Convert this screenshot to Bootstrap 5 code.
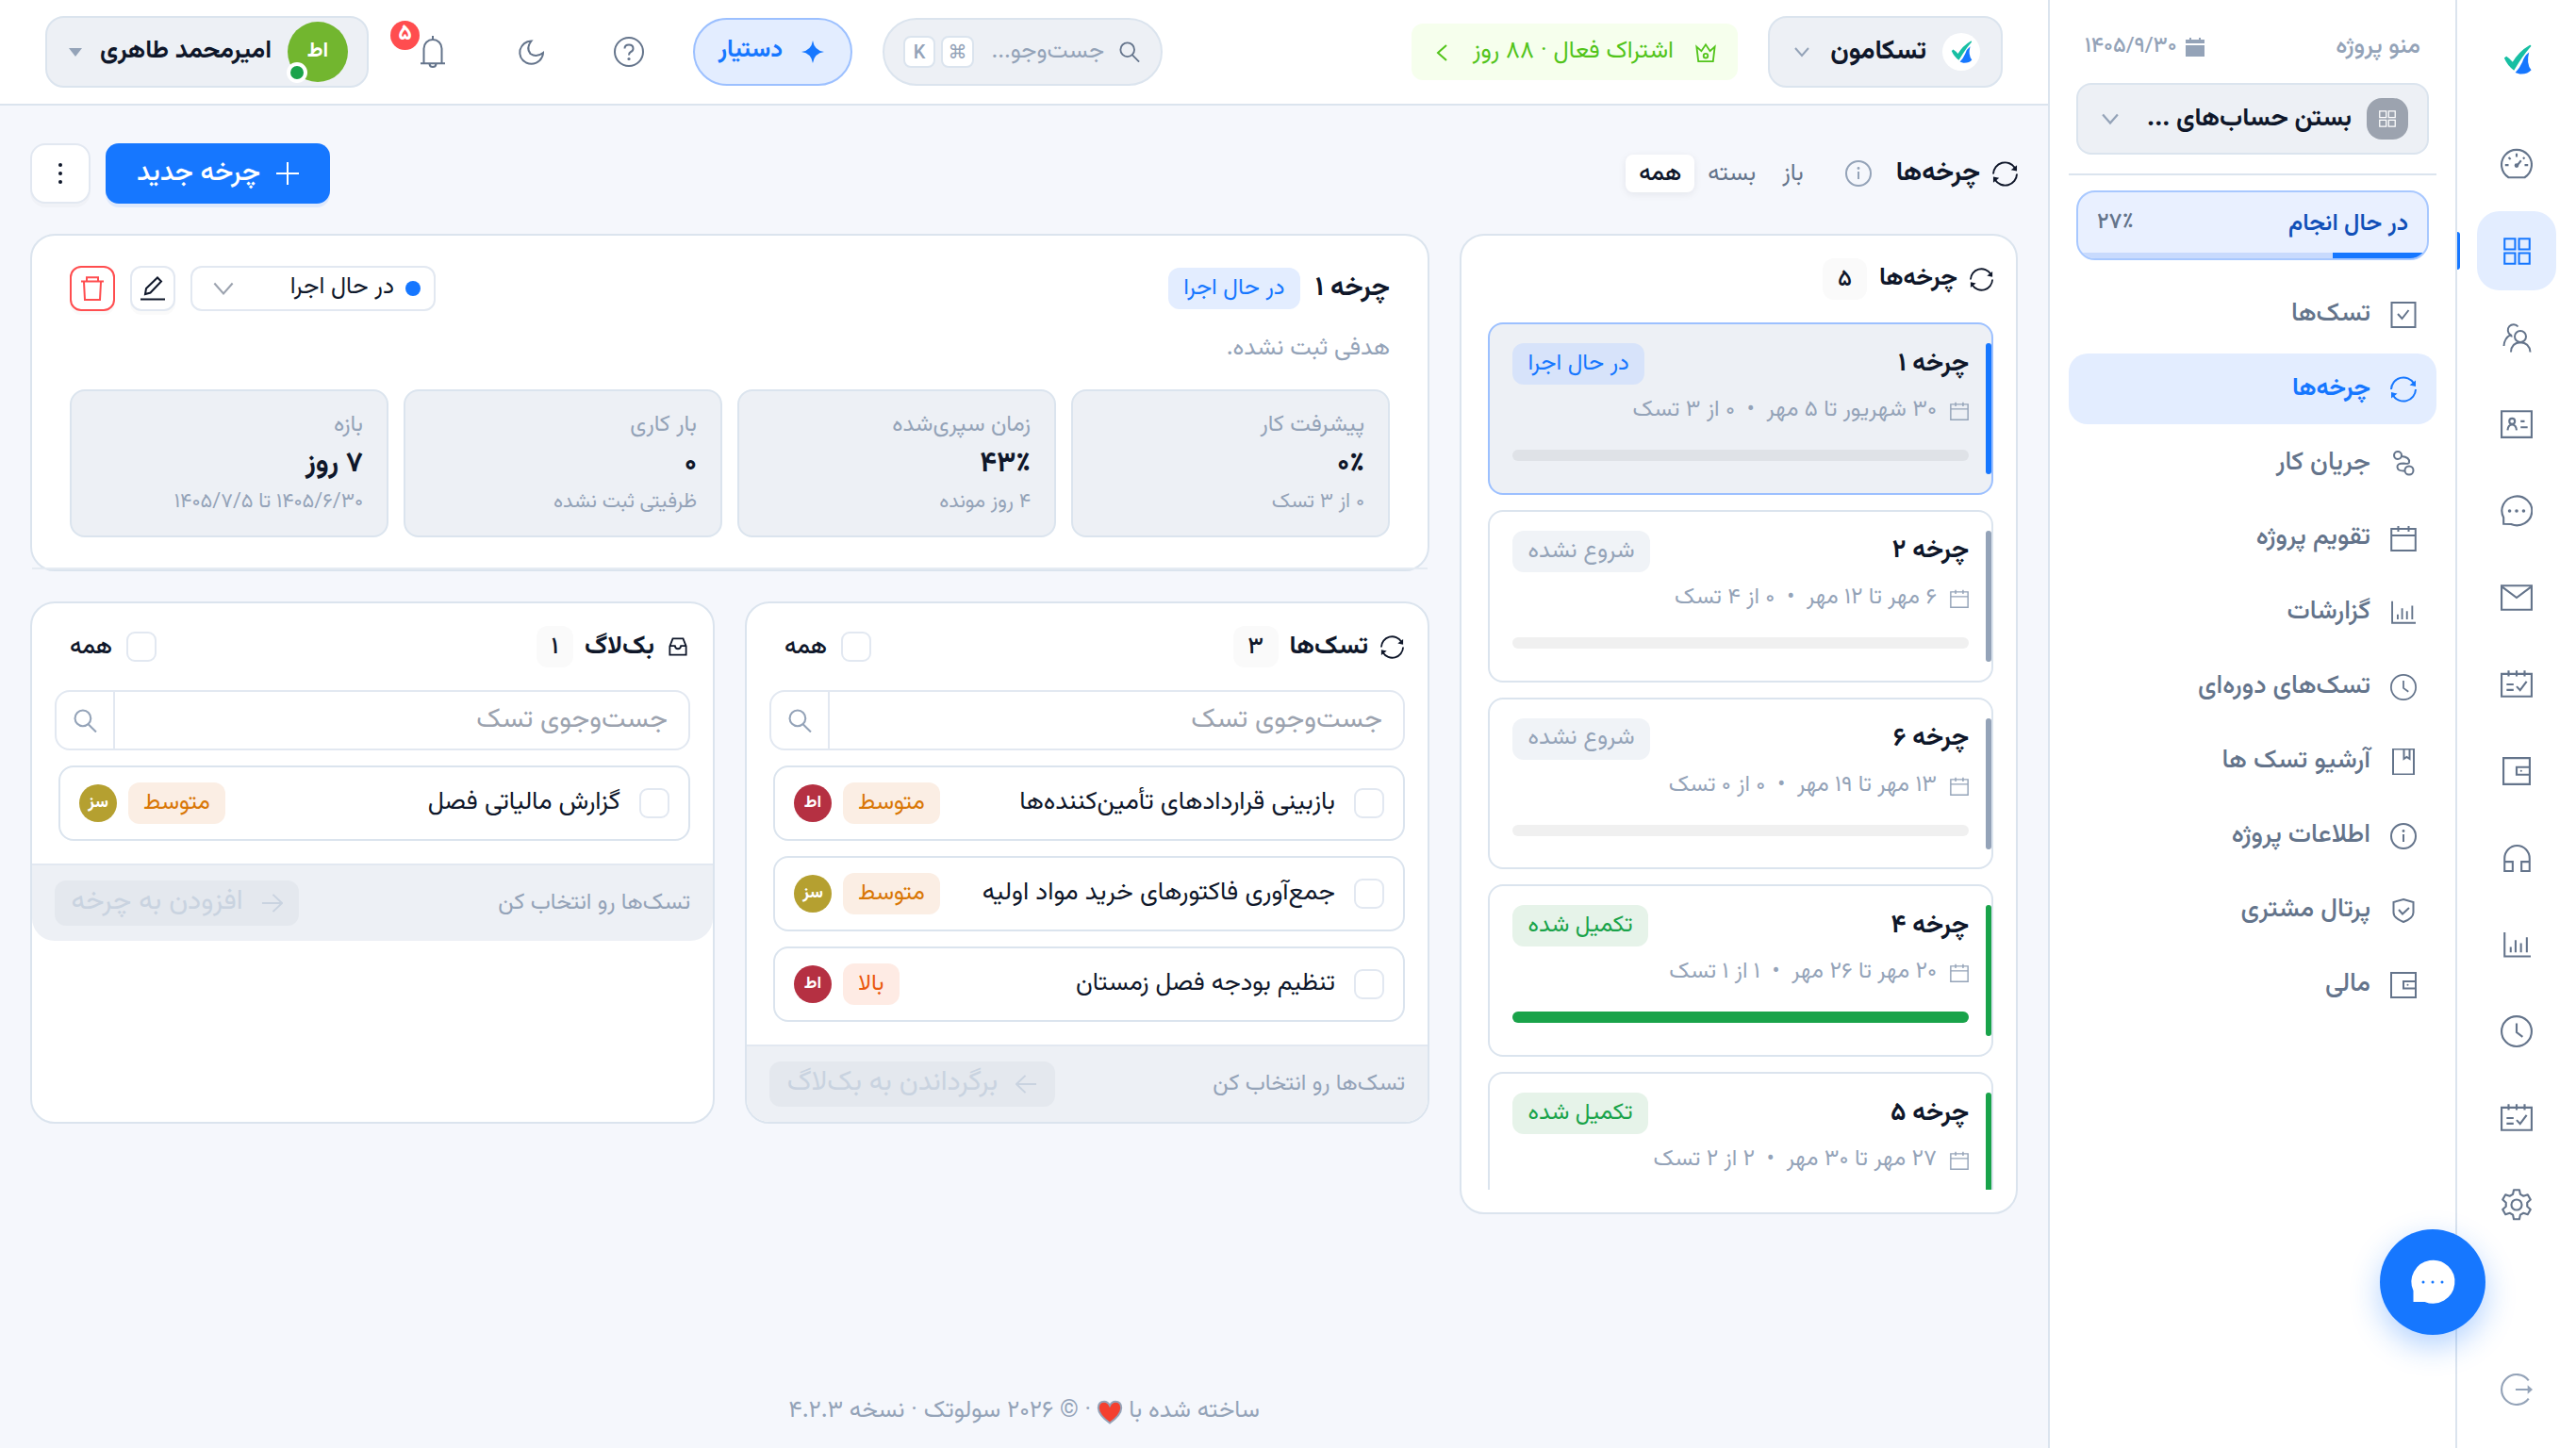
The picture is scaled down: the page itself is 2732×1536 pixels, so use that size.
<!DOCTYPE html>
<html lang="fa" dir="rtl">
<head>
<meta charset="utf-8">
<title>چرخه‌ها</title>
<link rel="stylesheet" href="https://cdn.jsdelivr.net/npm/bootstrap@5.3.0/dist/css/bootstrap.min.css">
<style>
:root{--line:#dbe4ee;--line2:#e2e8f1;--ink:#0f172a;--slate:#64748b;--mute:#94a3b8;--blue:#1677ff;--soft:#edf0f5}
body{font-family:Vazirmatn,"DejaVu Sans",sans-serif;font-size:27px;line-height:1.5;color:var(--ink);background:#f5f7fc;width:2732px;height:1536px;overflow:hidden}
svg{display:block;flex:none;fill:none;stroke:currentColor;stroke-width:2;overflow:visible}
.fillic{fill:currentColor;stroke:none}
.text-ink{color:var(--ink)}
.t{white-space:nowrap;line-height:1}
.rail{width:128px;border-left:2px solid var(--line);background:#fff;color:var(--slate)}
.rail-link{width:84px;height:84px;border-radius:24px;color:var(--slate)}
.rail-link.on{background:#e3edff;color:var(--blue)}
.rail-link.on::before{content:"";position:absolute;left:-21px;top:22px;width:3px;height:40px;background:var(--blue);border-radius:0 4px 4px 0}
.side{width:432px;border-left:2px solid var(--line);background:#fff;padding:0 20px}
.pick{height:76px;border:2px solid var(--line);border-radius:16px;background:var(--soft)}
.tile{width:44px;height:44px;border-radius:16px;background:#9ca3af;color:#fff}
.state{height:74px;border:2px solid #a8c8ff;border-radius:20px;background:#e9f0ff;overflow:hidden}
.state .track{height:6px;background:#c8dafd}
.menu-row{height:75px;border-radius:20px;padding:0 21px;gap:21px;color:var(--slate);font-size:27.3px;font-weight:500}
.menu-row.on{background:#e3edff;color:var(--blue);font-weight:700;font-size:26px}
.topbar{height:112px;border-bottom:2px solid var(--line);background:#fff;padding:0 48px;gap:32px}
.plan{width:346px;height:60px;border-radius:12px;background:#f6ffed;color:#52c41a;font-size:25.5px}
.find{width:297px;height:72px;border:2px solid var(--line);border-radius:36px;background:var(--soft);color:var(--mute)}
.key{height:34px;border:2px solid var(--line);border-radius:8px;background:#fff;font:500 20px Roboto,"DejaVu Sans",sans-serif}
.helper{width:169px;height:72px;border:2px solid #9cc0ff;border-radius:36px;background:#e3edff;color:var(--blue);font-weight:700;font-size:25.700px}
.round-btn{width:72px;height:72px;color:var(--slate)}
.alert-dot{left:-9px;top:3px;width:31px;height:31px;background:#ff4d4f;font-size:24px;padding-bottom:3px}
.ava{border-radius:50%;color:#fff;font-weight:700}
.filter{height:40px;border-radius:8px;font-size:25px;color:var(--slate)}
.filter.on{background:#fff;color:var(--ink);font-weight:500;box-shadow:0 2px 8px rgba(15,23,42,.08)}
.new-btn{width:238px;height:64px;border-radius:14px;background:var(--blue);color:#fff;font-size:29px;font-weight:500;box-shadow:0 4px 0 rgba(5,105,255,.09)}
.sq{border:2px solid var(--line2);background:#fff;box-shadow:0 4px 0 rgba(0,0,0,.02)}
.panel{background:#fff;border:2px solid var(--line);border-radius:26px}
.count{height:44px;border-radius:12px;background:#fafafa;font-size:25px;font-weight:500}
.tag{height:44px;border-radius:12px;font-size:24.5px;padding:0 16.5px;display:flex;align-items:center}
.tag-run{background:#e3edff;color:var(--blue)}
.tag-wait{background:#f0f3f7;color:var(--mute)}
.tag-done{background:#e6f3e9;color:#19a34a}
.tag-mid{background:#fbeee4;color:#d97706;padding:0 16px}
.tag-high{background:#feebe4;color:#ea580c;padding:0 16px}
.cycle{height:182.8px;margin-bottom:16px;border:2px solid var(--line);border-radius:16px;padding:20px 24px;flex:none;position:relative}
.cycle.on{background:var(--soft);border-color:#9cc0ff}
.cycle.on .tag{background:#d7e3fa}
.cycle::after{content:"";position:absolute;right:0;top:20px;width:6px;height:139px;border-radius:3px;background:currentColor}
.c-run{color:var(--blue)}.c-wait{color:var(--mute)}.c-done{color:#19a34a}
.when{color:var(--mute);font-size:23.8px;gap:14px;height:24px;margin-top:16px}
.meter{height:12px;border-radius:6px;background:#f0f0f0;margin-top:29px}
.cycle.on .meter{background:#dfe2e7}
.meter div{height:12px;border-radius:6px;background:#19a34a}
.stat{flex:1;height:157px;border:2px solid var(--line);border-radius:16px;background:var(--soft);padding:24px 25px 0;color:var(--mute)}
.stat-name{font-size:24.2px}
.stat-value{font-size:30px;margin:15px 0;color:var(--ink)}
.stat-note{font-size:21.6px}
.box{width:32px;height:32px;border:2px solid var(--line2);border-radius:9px;background:#fff;flex:none}
.seek{height:64px;border:2px solid var(--line2);border-radius:16px;font-size:28.7px;color:#9ca3af;margin:0 24px}
.seek .go{width:62px;border-right:2px solid var(--line2);color:var(--mute)}
.task{height:80px;border:2px solid var(--line);border-radius:16px;margin:16px 24px 0 28px;padding:0 20px;font-size:26.8px}
.foot{height:82px;border-top:2px solid var(--line2);background:var(--soft);border-radius:0 0 24px 24px;margin-top:24px;padding:0 24px;color:var(--mute);font-size:24px}
.off-btn{height:48px;border-radius:12px;background:#e4e8ee;color:#c9d3e0;font-size:29.5px}
.chat{left:2524px;top:1304px;width:112px;height:112px;border-radius:50%;background:var(--blue);color:#fff;box-shadow:0 12px 32px rgba(22,119,255,.32)}
</style>
<script src="https://cdn.jsdelivr.net/npm/bootstrap@5.3.0/dist/js/bootstrap.bundle.min.js"></script>
</head>
<body>
<svg width="0" height="0" class="position-absolute">
<symbol id="logo" viewBox="0 0 32 34"><path d="M1.500 15.500 4 13.500Q8 16 11 20 18 8 30 1 31.500.3 31.800 2 22 13 12.500 29.500Q5 24 1.500 15.500Z" fill="#17bfa3" stroke="none"/><path d="M29.500 9Q26 22 32 29 28 34 19 33.500L14 32Q19 27 22 20 24 13 29.500 9Z" fill="#1677ff" stroke="none"/></symbol>
<symbol id="gauge" viewBox="0 0 32 32"><path d="M8 29.400H24A15 15 0 1 0 8 29.400ZM16 5.500V9M4.500 17H8M24 17h3.500M8 9.300l2 2M24 9.300l-1.500 1.500M16.500 17.500l4-5"/><circle cx="16" cy="17.500" r="1.200" fill="currentColor"/></symbol>
<symbol id="grid" viewBox="0 0 28 28"><path d="M1.200 1.200H12V12H1.200ZM16 1.200H26.800V12H16ZM1.200 16H12V26.800H1.200ZM16 16H26.800V26.800H16Z"/></symbol>
<symbol id="users" viewBox="0 0 32 32"><circle cx="20" cy="15" r="6"/><path d="M10 31.500Q10.500 21.500 20 21.300 29.500 21.500 30.500 31.500M17.500 4.500A6 6 0 1 0 9.500 13.200Q3 17 2.500 25M9.500 13.200Q10 15 11.500 14.500"/></symbol>
<symbol id="idcard" viewBox="0 0 32 32"><path d="M1 3H31V29H1ZM20 13H24M20 19H27"/><circle cx="11.500" cy="13" r="2.800"/><path d="M7 22Q7.500 16.500 11.500 16.500T16 22"/></symbol>
<symbol id="talk" viewBox="0 0 32 32"><path d="M3 29V22.500A15 14.500 0 1 1 10.500 29.200Z"/><g fill="currentColor" stroke="none"><circle cx="9" cy="16" r="1.700"/><circle cx="16" cy="16" r="1.700"/><circle cx="23" cy="16" r="1.700"/></g></symbol>
<symbol id="mail" viewBox="0 0 32 32"><path d="M1 4H31V28H1ZM2 5.500 16 16 30 5.500"/></symbol>
<symbol id="sched" viewBox="0 0 32 32"><path d="M1 5.500H31V28H1ZM8 2V8M16 2V8M24 2V8M6 16H13M6 21.500H13M16 18l3.500 3.800L26 13"/></symbol>
<symbol id="wallet" viewBox="0 0 28 28"><path d="M1 1H27V27H1ZM27 10H14V17.500H27"/><circle cx="18.500" cy="13.800" r="1" fill="currentColor" stroke="none"/></symbol>
<symbol id="phones" viewBox="0 0 28 28"><path d="M1.200 16V14A12.800 13 0 0 1 26.800 14V27H18.500V17.500H26.800M1.200 14V27H9.500V17.500H1.200"/></symbol>
<symbol id="bars" viewBox="0 0 28 28"><path d="M1.200 1V25.500H28M7.500 21.500V16M12.500 21.500V9M18 21.500V12M24 21.500V6"/></symbol>
<symbol id="clock" viewBox="0 0 32 32"><circle cx="16" cy="16" r="15"/><path d="M16 8V17L22 21.500"/></symbol>
<symbol id="gear" viewBox="0 0 32 32"><path stroke-linejoin="round" d="M13.200 1.200h5.600l.9 4.300 3.200 1.800 4.200-1.400 2.800 4.900-3.300 3v3.900l3.300 3-2.800 4.900-4.200-1.400-3.200 1.800-.9 4.300h-5.600l-.9-4.300-3.200-1.800-4.200 1.400-2.800-4.900 3.300-3v-3.900l-3.300-3 2.800-4.900 4.200 1.400 3.200-1.800z"/><circle cx="16" cy="16" r="5.200"/></symbol>
<symbol id="exit" viewBox="0 0 32 32"><path d="M28 7A15 15 0 1 0 28 25M15 16H29"/><path d="M27 11.500 32 16 27 20.500Z" fill="currentColor" stroke="none"/></symbol>
<symbol id="tick" viewBox="0 0 28 28"><path d="M1.500 1H26.500V27H1.500ZM8 13l4.500 5L19.500 9"/></symbol>
<symbol id="sync" viewBox="0 0 28 28"><path d="M1 14A13 13 0 0 1 25 7.500M27 14A13 13 0 0 1 3 20.500"/><path d="M27 4.500V11L20.500 9.500ZM1 23.500V17L7.500 18.500Z" fill="currentColor" stroke="none"/></symbol>
<symbol id="flow" viewBox="0 0 28 28"><circle cx="8" cy="5" r="4"/><circle cx="20" cy="21" r="4.500"/><path d="M12 6Q21 7 20 12.500 19.500 14.500 14 13.500 7 13.500 7.500 17.500 8 22 15.500 21.500"/></symbol>
<symbol id="cal" viewBox="0 0 28 28"><path d="M1.200 4H26.800V27H1.200ZM1.200 11H26.800M8.500 1V7M19.500 1V7"/></symbol>
<symbol id="mark-book" viewBox="0 0 28 28"><path d="M3 .5H25V27.500H3ZM14.500.5V11L17.500 9 20.500 11V.5"/></symbol>
<symbol id="info" viewBox="0 0 28 28"><circle cx="14" cy="14" r="13"/><path d="M14 12V20"/><circle cx="14" cy="8.500" r="1.400" fill="currentColor" stroke="none"/></symbol>
<symbol id="shield" viewBox="0 0 28 28"><path d="M14 2 24.500 5V16Q24.500 22 14 26 3.500 22 3.500 16V5ZM9 13l4 4.500L20 11"/></symbol>
<symbol id="crown" viewBox="0 0 24 24"><path d="M1.500 5 7 10 12 2.500 17 10 22.500 5 20.500 22H3.500Z"/><circle cx="12" cy="15.500" r="2.500"/></symbol>
<symbol id="down" viewBox="0 0 16 16"><path d="M1 4 8 12 15 4"/></symbol>
<symbol id="lens" viewBox="0 0 24 24"><circle cx="9.500" cy="9.500" r="8"/><path d="M15 15.500 23 23.500"/></symbol>
<symbol id="inbox" viewBox="0 0 22 22"><path d="M1.500 10.500 5 1.500H17L20.500 10.500V20.500H1.500ZM1.500 10H7.500Q8 13.500 11 13.500T14.500 10H20.500"/></symbol>
<symbol id="arrow" viewBox="0 0 24 24"><path d="M1 12H23M13 2.500 23 12 13 21.500"/></symbol>
</svg>

<div class="d-flex h-100">
<nav class="rail d-flex flex-column align-items-center flex-shrink-0">
  <div class="d-flex align-items-center" style="height:132px;padding-bottom:6px"><svg width="31" height="32"><use href="#logo"/></svg></div>
  <div class="d-flex flex-column gap-2">
    <a class="rail-link d-flex align-items-center justify-content-center"><svg width="34" height="34"><use href="#gauge"/></svg></a>
    <a class="rail-link on position-relative d-flex align-items-center justify-content-center"><svg width="29" height="29"><use href="#grid"/></svg></a>
    <a class="rail-link d-flex align-items-center justify-content-center"><svg width="32" height="32"><use href="#users"/></svg></a>
    <a class="rail-link d-flex align-items-center justify-content-center"><svg width="34" height="34"><use href="#idcard"/></svg></a>
    <a class="rail-link d-flex align-items-center justify-content-center"><svg width="34" height="34"><use href="#talk"/></svg></a>
    <a class="rail-link d-flex align-items-center justify-content-center"><svg width="34" height="34"><use href="#mail"/></svg></a>
    <a class="rail-link d-flex align-items-center justify-content-center"><svg width="34" height="34"><use href="#sched"/></svg></a>
    <a class="rail-link d-flex align-items-center justify-content-center"><svg width="30" height="30"><use href="#wallet"/></svg></a>
    <a class="rail-link d-flex align-items-center justify-content-center"><svg width="29" height="29"><use href="#phones"/></svg></a>
    <a class="rail-link d-flex align-items-center justify-content-center"><svg width="29" height="29"><use href="#bars"/></svg></a>
    <a class="rail-link d-flex align-items-center justify-content-center"><svg width="34" height="34"><use href="#clock"/></svg></a>
    <a class="rail-link d-flex align-items-center justify-content-center"><svg width="34" height="34"><use href="#sched"/></svg></a>
    <a class="rail-link d-flex align-items-center justify-content-center"><svg width="34" height="34"><use href="#gear"/></svg></a>
  </div>
  <a class="rail-link d-flex align-items-center justify-content-center mt-auto" style="margin-bottom:20px;color:#94a3b8"><svg width="34" height="34"><use href="#exit"/></svg></a>
</nav>

<aside class="side flex-shrink-0">
  <div class="d-flex align-items-center justify-content-between" style="height:88px;padding:13px 17px 0;color:#94a3b8">
    <span class="t fw-medium" style="font-size:25.500px">منو پروژه</span>
    <span class="d-flex align-items-center" style="gap:9px"><svg class="fillic" width="20" height="20" viewBox="0 0 20 20"><path d="M0 2H4V0H6V2H14V0H16V2H20V6H0ZM0 8H20V20H0Z"/></svg><span class="t fw-medium" style="font-size:22.800px">۱۴۰۵/۹/۳۰</span></span>
  </div>
  <div class="pick d-flex align-items-center mx-2" style="padding:0 20px">
    <span class="tile d-flex align-items-center justify-content-center"><svg width="18" height="18" stroke-width="3"><use href="#grid"/></svg></span>
    <span class="t fw-bold" style="margin-right:16px;font-size:27px">بستن حساب‌های ...</span>
    <svg width="18" height="18" style="margin-right:auto;margin-left:5px;color:#94a3b8"><use href="#down"/></svg>
  </div>
  <div style="height:22px;border-bottom:2px solid #dbe4ee"></div>
  <div class="state d-flex flex-column mx-2" style="margin-top:16px;margin-bottom:20px">
    <div class="d-flex flex-fill align-items-center justify-content-between" style="padding:2px 20px 0">
      <span class="t fw-semibold" style="color:#1150b8;font-size:25px">در حال انجام</span><span class="t fw-medium" style="color:#64748b;font-size:23.500px">۲۷٪</span>
    </div>
    <div class="track"><div style="width:27%;height:6px;background:#1677ff"></div></div>
  </div>
  <div class="d-flex flex-column gap-1">
    <a class="menu-row text-decoration-none d-flex align-items-center"><svg width="28" height="28"><use href="#tick"/></svg><span class="t">تسک‌ها</span></a>
    <a class="menu-row on text-decoration-none d-flex align-items-center"><svg width="28" height="28"><use href="#sync"/></svg><span class="t">چرخه‌ها</span></a>
    <a class="menu-row text-decoration-none d-flex align-items-center"><svg width="28" height="28"><use href="#flow"/></svg><span class="t">جریان کار</span></a>
    <a class="menu-row text-decoration-none d-flex align-items-center"><svg width="28" height="28"><use href="#cal"/></svg><span class="t">تقویم پروژه</span></a>
    <a class="menu-row text-decoration-none d-flex align-items-center"><svg width="28" height="28" viewBox="-1 -1 30 30"><use href="#bars" width="28" height="28"/></svg><span class="t">گزارشات</span></a>
    <a class="menu-row text-decoration-none d-flex align-items-center"><svg width="28" height="28"><use href="#clock"/></svg><span class="t">تسک‌های دوره‌ای</span></a>
    <a class="menu-row text-decoration-none d-flex align-items-center"><svg width="28" height="28"><use href="#mark-book"/></svg><span class="t">آرشیو تسک ها</span></a>
    <a class="menu-row text-decoration-none d-flex align-items-center"><svg width="28" height="28"><use href="#info"/></svg><span class="t">اطلاعات پروژه</span></a>
    <a class="menu-row text-decoration-none d-flex align-items-center"><svg width="28" height="28"><use href="#shield"/></svg><span class="t">پرتال مشتری</span></a>
    <a class="menu-row text-decoration-none d-flex align-items-center"><svg width="28" height="28"><use href="#wallet"/></svg><span class="t">مالی</span></a>
  </div>
</aside>

<div class="d-flex flex-column flex-fill" style="min-width:0">
<header class="topbar d-flex align-items-center">
  <div class="pick d-flex align-items-center" style="width:249px;border-radius:20px;padding:0 22px">
    <span class="d-flex align-items-center justify-content-center bg-white rounded-circle" style="width:40px;height:40px"><svg width="24" height="24"><use href="#logo"/></svg></span>
    <span class="t fw-bold" style="margin-right:17px;font-size:28px">تسکامون</span>
    <svg width="16" height="16" style="margin-right:auto;margin-left:4px;color:#94a3b8"><use href="#down"/></svg>
  </div>
  <div class="plan d-flex align-items-center" style="padding:2px 23px 0">
    <svg width="22" height="22"><use href="#crown"/></svg>
    <span class="t" style="margin-right:23px">اشتراک فعال · ۸۸ روز</span>
    <svg width="18" height="16" viewBox="0 0 18 16" style="margin-right:auto" stroke-width="1.600"><path d="M14 0 5 8 14 16"/></svg>
  </div>
  <div class="find d-flex align-items-center" style="margin-right:auto;padding:0 22px 0 20px">
    <svg width="22" height="22" style="color:#64748b"><use href="#lens"/></svg>
    <span class="t" style="margin-right:16px;font-size:24.800px">جست‌وجو...</span>
    <span class="d-flex" style="gap:6px;margin-right:auto"><span class="key d-flex align-items-center justify-content-center" style="width:35px">⌘</span><span class="key d-flex align-items-center justify-content-center" style="width:34px">K</span></span>
  </div>
  <div class="helper d-flex align-items-center" style="gap:20px;padding-right:28px">
    <svg class="fillic" width="24" height="24" viewBox="0 0 24 24"><path d="M12 0Q13.500 10.500 24 12 13.500 13.500 12 24 10.500 13.500 0 12 10.500 10.500 12 0Z"/></svg><span class="t">دستیار</span>
  </div>
  <span class="round-btn d-flex align-items-center justify-content-center"><svg width="32" height="32" viewBox="0 0 32 32"><circle cx="16" cy="16" r="15"/><path d="M11.500 12.500Q11.500 8.500 16 8.500T20.500 12.500Q20.500 15 18 16 16 17 16 19.500"/><circle cx="16" cy="23.500" r="1.600" fill="currentColor" stroke="none"/></svg></span>
  <span class="round-btn d-flex align-items-center justify-content-center"><svg width="27" height="27" viewBox="0 0 27 27"><path d="M13.500 1.500Q4.500 2 1.500 11 0 20 8 24.500 16 28 22.500 22 26 18 26 14 19 19.500 12.500 15 7.500 9 13.500 1.500Z"/></svg></span>
  <span class="round-btn position-relative d-flex align-items-center justify-content-center"><svg width="28" height="34" viewBox="0 0 28 34"><path d="M14 0V4M4.500 29V13.500A9.500 9.500 0 0 1 23.500 13.500V29M1 29.200H27M10.500 30Q11 33 14 33T17.500 30"/></svg><span class="alert-dot position-absolute rounded-circle text-white fw-bold d-flex align-items-center justify-content-center t">۵</span></span>
  <div class="pick d-flex align-items-center" style="width:343px;border-radius:20px;padding:0 20px">
    <span class="ava position-relative d-flex align-items-center justify-content-center t" style="width:64px;height:64px;background:#72b62f;font-size:22px">اط<span class="position-absolute rounded-circle" style="left:-1px;bottom:-1px;width:22px;height:22px;border:4px solid #fff;background:#19a34a"></span></span>
    <span class="t fw-bold" style="margin-right:17px;font-size:26.500px">امیرمحمد طاهری</span>
    <svg class="fillic" width="14" height="9" viewBox="0 0 14 9" style="margin-right:auto;margin-left:3px;color:#94a3b8"><path d="M0 0H14L7 9Z"/></svg>
  </div>
</header>

<main class="d-flex flex-column flex-fill" style="padding:40px 32px 0">
  <div class="d-flex align-items-center" style="height:64px;margin-bottom:32px">
    <svg width="27" height="27"><use href="#sync"/></svg>
    <span class="t fw-bold" style="margin-right:13px;font-size:28px">چرخه‌ها</span>
    <svg width="28" height="28" style="margin-right:26px;color:#94a3b8"><use href="#info"/></svg>
    <div class="d-flex" style="margin-right:30px">
      <span class="filter d-flex align-items-center" style="padding:0 14px"><span class="t">باز</span></span>
      <span class="filter d-flex align-items-center" style="padding:0 14px"><span class="t">بسته</span></span>
      <span class="filter on d-flex align-items-center" style="padding:0 14px"><span class="t">همه</span></span>
    </div>
    <div class="new-btn d-flex align-items-center justify-content-center" style="margin-right:auto;gap:17px"><svg width="24" height="24" viewBox="0 0 24 24"><path d="M12 0V24M0 12H24"/></svg><span class="t">چرخه جدید</span></div>
    <div class="sq d-flex align-items-center justify-content-center" style="width:64px;height:64px;border-radius:16px;margin-right:16px"><svg class="fillic" width="4" height="24" viewBox="0 0 4 24"><circle cx="2" cy="3" r="2"/><circle cx="2" cy="12" r="2"/><circle cx="2" cy="21" r="2"/></svg></div>
  </div>

  <div class="d-flex align-items-start" style="gap:32px">
    <section class="panel flex-shrink-0 d-flex flex-column" style="width:592px;height:1040px;padding:0 24px 0 28px">
      <div class="d-flex align-items-center" style="height:92px">
        <svg width="25" height="25"><use href="#sync"/></svg><span class="t fw-bold" style="margin-right:13px;font-size:26px">چرخه‌ها</span>
        <span class="count t d-flex align-items-center justify-content-center" style="width:47px;margin-right:13px">۵</span>
      </div>
      <div class="overflow-hidden d-flex flex-column" style="height:920px">
        <div class="cycle on c-run"><div class="d-flex justify-content-between align-items-center"><span class="t fw-bold text-ink">چرخه ۱</span><span class="tag tag-run t">در حال اجرا</span></div>
          <div class="when d-flex align-items-center"><svg width="20" height="20"><use href="#cal"/></svg><span class="t">۳۰ شهریور تا ۵ مهر&nbsp; • &nbsp;۰ از ۳ تسک</span></div><div class="meter"></div></div>
        <div class="cycle c-wait"><div class="d-flex justify-content-between align-items-center"><span class="t fw-bold text-ink">چرخه ۲</span><span class="tag tag-wait t">شروع نشده</span></div>
          <div class="when d-flex align-items-center"><svg width="20" height="20"><use href="#cal"/></svg><span class="t">۶ مهر تا ۱۲ مهر&nbsp; • &nbsp;۰ از ۴ تسک</span></div><div class="meter"></div></div>
        <div class="cycle c-wait"><div class="d-flex justify-content-between align-items-center"><span class="t fw-bold text-ink">چرخه ۶</span><span class="tag tag-wait t">شروع نشده</span></div>
          <div class="when d-flex align-items-center"><svg width="20" height="20"><use href="#cal"/></svg><span class="t">۱۳ مهر تا ۱۹ مهر&nbsp; • &nbsp;۰ از ۰ تسک</span></div><div class="meter"></div></div>
        <div class="cycle c-done"><div class="d-flex justify-content-between align-items-center"><span class="t fw-bold text-ink">چرخه ۴</span><span class="tag tag-done t">تکمیل شده</span></div>
          <div class="when d-flex align-items-center"><svg width="20" height="20"><use href="#cal"/></svg><span class="t">۲۰ مهر تا ۲۶ مهر&nbsp; • &nbsp;۱ از ۱ تسک</span></div><div class="meter"><div style="width:100%"></div></div></div>
        <div class="cycle c-done"><div class="d-flex justify-content-between align-items-center"><span class="t fw-bold text-ink">چرخه ۵</span><span class="tag tag-done t">تکمیل شده</span></div>
          <div class="when d-flex align-items-center"><svg width="20" height="20"><use href="#cal"/></svg><span class="t">۲۷ مهر تا ۳۰ مهر&nbsp; • &nbsp;۲ از ۲ تسک</span></div><div class="meter"><div style="width:100%"></div></div></div>
      </div>
    </section>

    <div class="flex-fill d-flex flex-column" style="gap:32px;min-width:0">
      <section class="panel" style="height:358px">
        <div class="h-100" style="border-bottom:2px solid #e5ebf2;padding:32px 40px 0">
          <div class="d-flex align-items-center" style="height:48px">
            <span class="t fw-bold" style="font-size:28.500px">چرخه ۱</span><span class="tag tag-run t" style="margin-right:16px">در حال اجرا</span>
            <div class="d-flex align-items-center" style="width:260px;height:48px;border:2px solid #e2e8f1;border-radius:12px;margin-right:auto;padding:0 14px 0 22px">
              <span class="rounded-circle" style="width:16px;height:16px;background:#1677ff"></span><span class="t" style="margin-right:12px;font-size:25.200px">در حال اجرا</span>
              <svg width="22" height="22" style="margin-right:auto;color:#9ca3af;stroke-width:1.500"><use href="#down"/></svg>
            </div>
            <span class="sq d-flex align-items-center justify-content-center" style="width:48px;height:48px;border-radius:12px;margin-right:16px"><svg width="26" height="26" viewBox="0 0 26 26"><path d="M0 24.500H26M5 19 6 13 18 1.500 22 5.500 10.500 17.500Z"/></svg></span>
            <span class="sq d-flex align-items-center justify-content-center" style="width:48px;height:48px;border-radius:12px;margin-right:16px;border-color:#ff4d4f;color:#ff4d4f"><svg width="24" height="26" viewBox="0 0 24 26"><path d="M0 5.500H24M6 5V1.200H18V5M3 6 4 25H20L21 6"/></svg></span>
          </div>
          <div class="t" style="color:#94a3b8;font-size:25.300px;margin-top:28px;height:55px">هدفی ثبت نشده.</div>
          <div class="d-flex" style="gap:16px">
            <div class="stat d-flex flex-column"><span class="t stat-name">پیشرفت کار</span><span class="t fw-bold stat-value">۰٪</span><span class="t stat-note">۰ از ۳ تسک</span></div>
            <div class="stat d-flex flex-column"><span class="t stat-name">زمان سپری‌شده</span><span class="t fw-bold stat-value">۴۳٪</span><span class="t stat-note">۴ روز مونده</span></div>
            <div class="stat d-flex flex-column"><span class="t stat-name">بار کاری</span><span class="t fw-bold stat-value">۰</span><span class="t stat-note">ظرفیتی ثبت نشده</span></div>
            <div class="stat d-flex flex-column"><span class="t stat-name">بازه</span><span class="t fw-bold stat-value">۷ روز</span><span class="t stat-note">۱۴۰۵/۶/۳۰ تا ۱۴۰۵/۷/۵</span></div>
          </div>
        </div>
      </section>

      <div class="d-flex" style="gap:32px">
        <section class="panel flex-fill" style="height:554px;width:726px">
          <div class="d-flex align-items-center" style="height:92px;padding:0 25px 0 40px">
            <svg width="25" height="25"><use href="#sync"/></svg><span class="t fw-bold" style="margin-right:13px;font-size:27px">تسک‌ها</span><span class="count t d-flex align-items-center justify-content-center" style="width:48px;margin-right:12px">۳</span>
            <span class="box" style="margin-right:auto"></span><span class="t fw-medium" style="margin-right:15px;font-size:25px">همه</span>
          </div>
          <div class="seek d-flex align-items-stretch"><span class="t my-auto" style="margin-right:22px">جست‌وجوی تسک</span><span class="go d-flex align-items-center justify-content-center" style="margin-right:auto"><svg width="25" height="25"><use href="#lens"/></svg></span></div>
          <div class="task d-flex align-items-center"><span class="box"></span><span class="t" style="margin-right:20px">بازبینی قراردادهای تأمین‌کننده‌ها</span><span class="tag tag-mid t" style="margin-right:auto">متوسط</span><span class="ava t d-flex align-items-center justify-content-center" style="width:40px;height:40px;background:#b53042;font-size:18px;margin-right:12px">اط</span></div>
          <div class="task d-flex align-items-center"><span class="box"></span><span class="t" style="margin-right:20px">جمع‌آوری فاکتورهای خرید مواد اولیه</span><span class="tag tag-mid t" style="margin-right:auto">متوسط</span><span class="ava t d-flex align-items-center justify-content-center" style="width:40px;height:40px;background:#b5a030;font-size:18px;margin-right:12px">سز</span></div>
          <div class="task d-flex align-items-center"><span class="box"></span><span class="t" style="margin-right:20px;font-size:26.200px">تنظیم بودجه فصل زمستان</span><span class="tag tag-high t" style="margin-right:auto">بالا</span><span class="ava t d-flex align-items-center justify-content-center" style="width:40px;height:40px;background:#b53042;font-size:18px;margin-right:12px">اط</span></div>
          <div class="foot d-flex align-items-center justify-content-between"><span class="t">تسک‌ها رو انتخاب کن</span><span class="off-btn d-flex align-items-center justify-content-center" style="width:303px;gap:19px"><svg width="23" height="24" style="transform:scaleX(-1)"><use href="#arrow"/></svg><span class="t">برگرداندن به بک‌لاگ</span></span></div>
        </section>
        <section class="panel flex-fill" style="height:554px;width:726px">
          <div class="d-flex align-items-center" style="height:92px;padding:0 27px 0 40px">
            <svg width="20" height="20"><use href="#inbox"/></svg><span class="t fw-bold" style="margin-right:15px;font-size:27px">بک‌لاگ</span><span class="count t d-flex align-items-center justify-content-center" style="width:39px;margin-right:12px">۱</span>
            <span class="box" style="margin-right:auto"></span><span class="t fw-medium" style="margin-right:15px;font-size:25px">همه</span>
          </div>
          <div class="seek d-flex align-items-stretch"><span class="t my-auto" style="margin-right:22px">جست‌وجوی تسک</span><span class="go d-flex align-items-center justify-content-center" style="margin-right:auto"><svg width="25" height="25"><use href="#lens"/></svg></span></div>
          <div class="task d-flex align-items-center"><span class="box"></span><span class="t" style="margin-right:20px">گزارش مالیاتی فصل</span><span class="tag tag-mid t" style="margin-right:auto">متوسط</span><span class="ava t d-flex align-items-center justify-content-center" style="width:40px;height:40px;background:#b5a030;font-size:18px;margin-right:12px">سز</span></div>
          <div class="foot d-flex align-items-center justify-content-between"><span class="t">تسک‌ها رو انتخاب کن</span><span class="off-btn d-flex align-items-center justify-content-center" style="width:259px;gap:19px"><svg width="23" height="24"><use href="#arrow"/></svg><span class="t">افزودن به چرخه</span></span></div>
        </section>
      </div>
    </div>
  </div>
  <footer class="d-flex justify-content-center align-items-center mt-auto" style="height:77px;font-size:25.200px;color:#94a3b8;gap:7px">
    <span class="t">ساخته شده با</span>
    <svg width="26" height="24" viewBox="0 0 26 24" stroke="none"><path d="M13 23.500Q1 15 .8 7.500 1 .8 7 .8 11 .8 13 5 15 .8 19 .8 25 .8 25.200 7.500 25 15 13 23.500Z" fill="#f4402f"/></svg>
    <span class="t">· © ۲۰۲۶ سولوتک · نسخه ۴.۲.۳</span>
  </footer>
</main>
</div>
</div>
<div class="chat position-absolute d-flex align-items-center justify-content-center"><svg width="44" height="44" viewBox="0 0 44 44" stroke="none"><path d="M2.500 42V31A22 22 0 1 1 14 42Z" fill="#fff"/><g fill="#1677ff"><circle cx="12" cy="22" r="2.500"/><circle cx="22" cy="22" r="2.500"/><circle cx="32" cy="22" r="2.500"/></g></svg></div>
</body>
</html>
